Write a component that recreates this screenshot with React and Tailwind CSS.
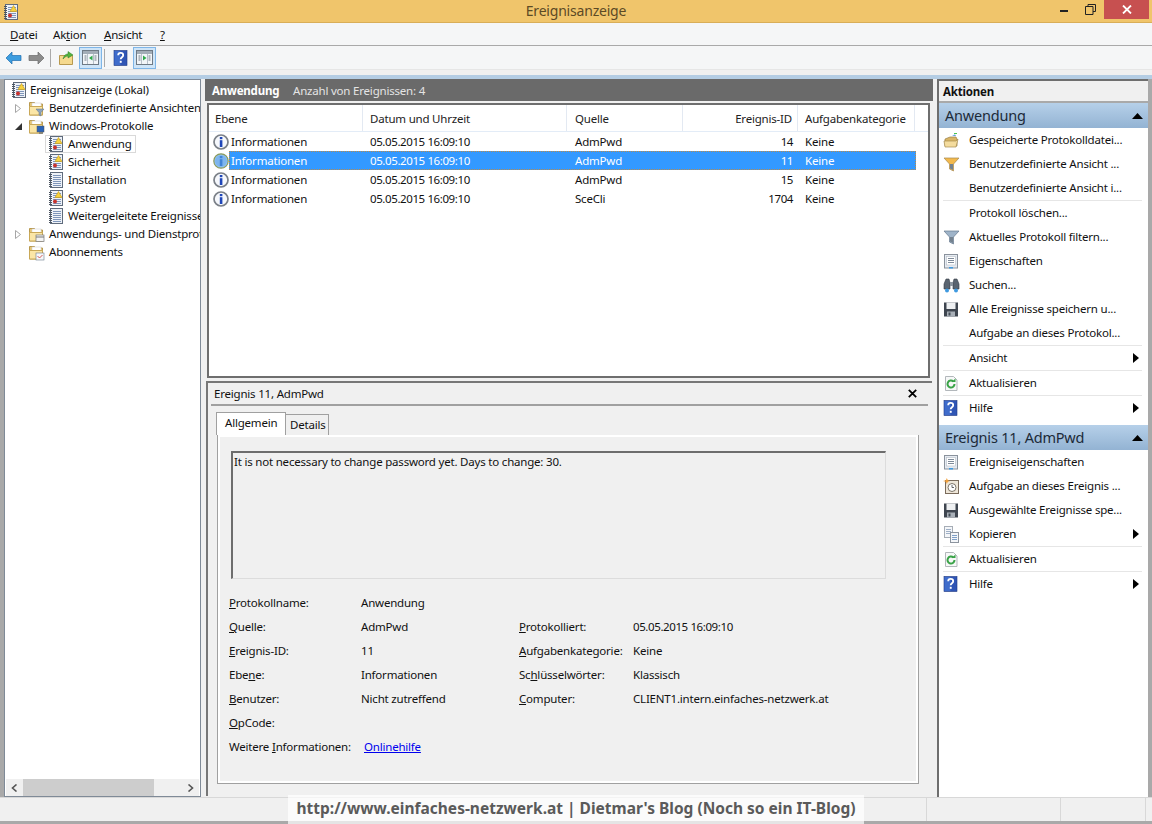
import React from 'react';

/* ── Icons ─────────────────────────────────────────── */
const LogIcon = ({ warn }) => (
  <svg width="16" height="16" viewBox="0 0 16 16" className="shrink-0">
    <rect x="2.500" y="0.500" width="12" height="15" fill="#eef2f8" stroke="#5f6b7c" />
    <path d="M5 3.500h8M5 5.500h8M5 7.500h8M5 9.500h8M5 11.500h8M5 13.500h8" stroke="#7f96ba" />
    <path d="M1 2.500h3M1 4.500h3M1 6.500h3M1 8.500h3M1 10.500h3M1 12.500h3M1 14.500h3" stroke="#4c5561" />
    {warn && (
      <>
        <path d="M10.500 1.500l3.500 6H7z" fill="#f7d23e" stroke="#c99a10" strokeWidth="0.6" />
        <circle cx="7" cy="11.500" r="2" fill="#c8332e" />
      </>
    )}
  </svg>
);

const Folder = ({ children }) => (
  <svg width="17" height="17" viewBox="0 0 17 17" className="shrink-0">
    <path d="M1.500 2.500h5l1 1.500h7v11h-13z" fill="#e7c777" stroke="#b8994f" />
    <rect x="4" y="3" width="9" height="4" fill="#fff" stroke="#c9c9c9" strokeWidth="0.5" />
    <path d="M1.500 6.500h13v8.500h-13z" fill="#fbe6a6" stroke="#c9a857" />
    {children}
  </svg>
);

const Funnel = ({ color = '#9fb4c9' }) => (
  <svg width="17" height="17" viewBox="0 0 17 17" className="shrink-0">
    <path d="M1 2h15l-5.500 6v7l-4-2V8z" fill={color} stroke="#66788c" strokeWidth="0.7" />
    <path d="M7 8h3v6l-3-1.500z" fill="#74828f" />
  </svg>
);

const YellowFunnel = () => (
  <svg width="17" height="17" viewBox="0 0 17 17" className="shrink-0">
    <path d="M1 2h15l-5.500 6v7l-4-2V8z" fill="#f3b94c" stroke="#a88a50" strokeWidth="0.7" />
    <path d="M7 8h3v6l-3-1.500z" fill="#74828f" />
  </svg>
);

const OpenFolder = () => (
  <svg width="17" height="17" viewBox="0 0 17 17" className="shrink-0">
    <path d="M11 1.500h3" stroke="#49c44c" />
    <path d="M2 7l5-2h6l1 2v7H2z" fill="#d9b565" stroke="#9a8048" strokeWidth="0.7" />
    <path d="M1 9h12l2-2-2 8H2z" fill="#f4dc9e" stroke="#a68c50" strokeWidth="0.7" />
    <path d="M9 3.500l3-1 1 1.500z" fill="#3c8fd8" />
  </svg>
);

const Props = () => (
  <svg width="17" height="17" viewBox="0 0 17 17" className="shrink-0">
    <rect x="1.500" y="1.500" width="13" height="13.500" fill="#e6ebf2" stroke="#8a929c" />
    <rect x="3.500" y="3.500" width="9" height="8.500" fill="#fff" stroke="#b5bcc5" strokeWidth="0.6" />
    <path d="M5 5.500h6M5 7.500h6M5 9.500h6" stroke="#7f8b9a" />
    <path d="M6 14h4v1.500H6z" fill="#3f9ae0" />
  </svg>
);

const Binoculars = () => (
  <svg width="17" height="17" viewBox="0 0 17 17" className="shrink-0">
    <path d="M3 2h3l1 4v6H1V7z" fill="#5a6470" stroke="#333b45" strokeWidth="0.6" />
    <path d="M11 2h3l2 5v5h-6V6z" fill="#5a6470" stroke="#333b45" strokeWidth="0.6" />
    <rect x="7" y="5" width="3" height="4" fill="#8b949e" />
    <circle cx="4" cy="13.500" r="2" fill="#3f9ae0" />
    <circle cx="13" cy="13.500" r="2" fill="#3f9ae0" />
  </svg>
);

const Floppy = () => (
  <svg width="17" height="17" viewBox="0 0 17 17" className="shrink-0">
    <path d="M1 1.500h14v14H1z" fill="#3f4650" />
    <rect x="3.500" y="1.500" width="9" height="6.500" fill="#eef0f2" />
    <rect x="4" y="10.500" width="8" height="5" fill="#a9b0b8" />
    <rect x="5.500" y="11.500" width="2" height="3" fill="#444c56" />
  </svg>
);

const Refresh = () => (
  <svg width="17" height="17" viewBox="0 0 17 17" className="shrink-0">
    <path d="M2.500 1.500h8l3.500 3.500v10.500H2.500z" fill="#f7f8f8" stroke="#b2b7bb" />
    <path d="M11.500 9a3.500 3.500 0 1 1-1.200-2.600" fill="none" stroke="#3aa348" strokeWidth="2" />
    <path d="M8.500 7h4V3.500z" fill="#3aa348" />
  </svg>
);

const Help = ({ size = 16 }) => (
  <svg width={size} height={size} viewBox="0 0 16 16" className="shrink-0">
    <rect x="1" y="0.500" width="13" height="15" fill="#2f55b5" stroke="#1f3a82" strokeWidth="0.6" />
    <rect x="1.500" y="1" width="6" height="14" fill="#3f6ccb" />
    <path d="M5.200 5.200c0-3 5-3 5 0 0 2-2.500 2-2.500 4" fill="none" stroke="#fff" strokeWidth="1.800" />
    <rect x="6.800" y="10.800" width="1.900" height="2" fill="#fff" />
  </svg>
);

const Clock = () => (
  <svg width="17" height="17" viewBox="0 0 17 17" className="shrink-0">
    <rect x="2.500" y="2.500" width="13" height="13" fill="#eee6d8" stroke="#7a6b5b" />
    <circle cx="9" cy="9.500" r="4" fill="#fff" stroke="#7c7468" />
    <path d="M9 7v2.500h2" fill="none" stroke="#444" strokeWidth="0.8" />
    <path d="M0 3l3-.8L3.800 0l1 2.200L7 3l-2.200.8L3.800 6 3 3.800z" fill="#f2a03a" />
  </svg>
);

const Copy = () => (
  <svg width="17" height="17" viewBox="0 0 17 17" className="shrink-0">
    <rect x="1.500" y="0.500" width="8" height="11" fill="#f4f6f9" stroke="#a6adb6" />
    <path d="M3 3.500h5M3 5.500h5M3 7.500h5" stroke="#9fb0c7" />
    <rect x="7.500" y="6.500" width="8" height="10" fill="#f4f6f9" stroke="#8c949e" />
    <path d="M9 9.500h5M9 11.500h5M9 13.500h5" stroke="#7fa0c8" />
  </svg>
);

const InfoIcon = ({ selected }) => (
  <svg width="16" height="16" viewBox="0 0 16 16" className="shrink-0">
    {selected ? (
      <>
        <circle cx="8" cy="8" r="7.200" fill="#8fc0f0" stroke="#8a9a5a" strokeWidth="1.200" />
        <circle cx="8" cy="8" r="5.800" fill="#7db5ee" />
        <rect x="6.800" y="3" width="2.600" height="2.200" fill="#3f83d8" />
        <rect x="6.800" y="6.200" width="2.600" height="6.800" fill="#3f83d8" />
      </>
    ) : (
      <>
        <circle cx="8" cy="8" r="7" fill="#f6f8fc" stroke="#7b8088" strokeWidth="1.700" />
        <rect x="6.800" y="3" width="2.600" height="2.200" fill="#1f46b8" />
        <rect x="6.800" y="6.200" width="2.600" height="6.800" fill="#1f46b8" />
      </>
    )}
  </svg>
);

const PaneIcon = ({ right }) => (
  <svg width="17" height="15" viewBox="0 0 17 15" className="shrink-0">
    <rect x="0.500" y="0.500" width="16" height="14" fill="#f2f5f8" stroke="#6f7a85" />
    <rect x="1" y="1" width="15" height="3" fill="#a3adb7" />
    <path d="M2.500 6h2M2.500 8h2M2.500 10h2M12.500 6h2M12.500 8h2M12.500 10h2" stroke="#6f7a85" />
    <path d={right ? 'M7 5.500l3.500 2.500L7 10.500z' : 'M10.500 5.500L7 8l3.500 2.500z'} fill="#2fa84a" />
    <path d="M5.500 4v10M11.500 4v10" stroke="#b7c0c9" />
  </svg>
);

const SubArrow = () => (
  <svg width="6" height="10" viewBox="0 0 6 10" className="shrink-0"><path d="M0 0l6 5-6 5z" fill="#000" /></svg>
);

const UpArrow = () => (
  <svg width="11" height="6" viewBox="0 0 11 6" className="shrink-0"><path d="M5.500 0L11 6H0z" fill="#000" /></svg>
);

/* ── Data ──────────────────────────────────────────── */
const EVENTS = [
  { date: '05.05.2015 16:09:10', src: 'AdmPwd', id: '14' },
  { date: '05.05.2015 16:09:10', src: 'AdmPwd', id: '11', selected: true },
  { date: '05.05.2015 16:09:10', src: 'AdmPwd', id: '15' },
  { date: '05.05.2015 16:09:10', src: 'SceCli', id: '1704' },
];

const ACTIONS_LOG = [
  { icon: <OpenFolder />, label: 'Gespeicherte Protokolldatei...' },
  { icon: <YellowFunnel />, label: 'Benutzerdefinierte Ansicht ...' },
  { label: 'Benutzerdefinierte Ansicht i...', sep: true },
  { label: 'Protokoll löschen...' },
  { icon: <Funnel />, label: 'Aktuelles Protokoll filtern...' },
  { icon: <Props />, label: 'Eigenschaften' },
  { icon: <Binoculars />, label: 'Suchen...' },
  { icon: <Floppy />, label: 'Alle Ereignisse speichern u...' },
  { label: 'Aufgabe an dieses Protokol...', sep: true },
  { label: 'Ansicht', sub: true, sep: true },
  { icon: <Refresh />, label: 'Aktualisieren', sep: true },
  { icon: <Help />, label: 'Hilfe', sub: true },
];

const ACTIONS_EVENT = [
  { icon: <Props />, label: 'Ereigniseigenschaften' },
  { icon: <Clock />, label: 'Aufgabe an dieses Ereignis ...' },
  { icon: <Floppy />, label: 'Ausgewählte Ereignisse spe...' },
  { icon: <Copy />, label: 'Kopieren', sub: true, sep: true },
  { icon: <Refresh />, label: 'Aktualisieren', sep: true },
  { icon: <Help />, label: 'Hilfe', sub: true },
];

/* ── Pieces ────────────────────────────────────────── */
function TitleBar() {
  return (
    <div className="grid grid-cols-[1fr_auto_1fr] h-[23px] bg-[#f0c56b] border-b border-[#d9ae58]">
      <div className="pl-[3px] pt-[4px]">
        <LogIcon warn />
      </div>
      <div className="text-[14px] leading-[22px] text-[#5c4a25]">Ereignisanzeige</div>
      <div className="flex justify-end items-start">
        <div className="flex items-center justify-center w-[26px] h-[19px]">
          <div className="w-[8px] h-[2px] mt-[3px] bg-[#222]" />
        </div>
        <div className="flex items-center justify-center w-[26px] h-[19px] mr-[1px]">
          <svg width="11" height="11" viewBox="0 0 11 11"><path d="M3 2.500V.5h7.500v7H8M.5 2.500h7.500v8H.5z" fill="none" stroke="#222" /></svg>
        </div>
        <div className="flex items-center justify-center w-[45px] h-[19px] mr-[3px] bg-[#c75050]">
          <svg width="10" height="9" viewBox="0 0 10 9"><path d="M1 .5l8 8M9 .5l-8 8" stroke="#fff" strokeWidth="1.800" /></svg>
        </div>
      </div>
    </div>
  );
}

function MenuBar() {
  return (
    <div className="flex items-center h-[23px] pl-[10px] pt-px bg-[#f5f6f7] border-b border-[#a9a9a9] text-[11.500px] text-[#111]">
      <span className="w-[43px]"><u>D</u>atei</span>
      <span className="w-[51px]">Ak<u>t</u>ion</span>
      <span className="w-[56px]"><u>A</u>nsicht</span>
      <span><u>?</u></span>
    </div>
  );
}

function ToolBar() {
  return (
    <div className="flex items-center h-[23px] pl-[5px] bg-[#f5f6f7]">
      <svg width="17" height="14" viewBox="0 0 17 14" className="shrink-0">
        <path d="M7 1L1 7l6 6V9.500h9v-5H7z" fill="#3d9ddf" stroke="#1f6fb0" strokeWidth="0.7" />
      </svg>
      <svg width="17" height="14" viewBox="0 0 17 14" className="shrink-0 ml-[6px]">
        <path d="M10 1l6 6-6 6V9.500H1v-5h9z" fill="#8c8c8c" stroke="#6a6a6a" strokeWidth="0.7" />
      </svg>
      <div className="w-px h-[18px] ml-[5px] bg-[#a9a9a9]" />
      <div className="ml-[7px]">
        <svg width="17" height="17" viewBox="0 0 17 17" className="shrink-0">
          <path d="M1.500 6.500h13v9h-13z" fill="#f5d98e" stroke="#b8994f" />
          <path d="M5 10c1-4 3-5 5-5V2.500L15 6l-5 3V7c-2 0-3 1-5 3z" fill="#52b33f" stroke="#2f7d2a" strokeWidth="0.5" />
        </svg>
      </div>
      <div className="flex items-center justify-center w-[23px] h-[22px] ml-[4px] bg-[#cfe5f8] border border-[#7fb6e8]">
        <PaneIcon />
      </div>
      <div className="w-px h-[18px] ml-[2px] bg-[#a9a9a9]" />
      <div className="ml-[8px]"><Help size={16} /></div>
      <div className="flex items-center justify-center w-[23px] h-[22px] ml-[4px] bg-[#cfe5f8] border border-[#7fb6e8]">
        <PaneIcon right />
      </div>
    </div>
  );
}

function Expander({ open }) {
  return (
    <span className="flex items-center w-[13px] shrink-0">
      {open ? (
        <svg width="7" height="7" viewBox="0 0 7 7"><path d="M7 0v7H0z" fill="#333" /></svg>
      ) : (
        <svg width="6" height="9" viewBox="0 0 6 9"><path d="M.5 .5l5 4-5 4z" fill="#fff" stroke="#a6a6a6" /></svg>
      )}
    </span>
  );
}

function Tree() {
  return (
    <div className="flex flex-col w-[197px] shrink-0 bg-white border border-[#7f8a97] overflow-hidden">
      <div className="flex-1 pt-px whitespace-nowrap text-[11.500px] text-[#111] overflow-hidden">
        <div className="flex items-center h-[18px] pl-[6px] gap-[3px]"><LogIcon warn />Ereignisanzeige (Lokal)</div>
        <div className="flex items-center h-[18px] pl-[10px]"><Expander /><Folder><path d="M8 9h8l-3 3.500V16l-2-1v-2.500z" fill="#8ea4bb" stroke="#5f7186" strokeWidth="0.5" /></Folder><span className="ml-[4px]">Benutzerdefinierte Ansichten</span></div>
        <div className="flex items-center h-[18px] pl-[10px]"><Expander open /><Folder><rect x="9" y="8" width="7" height="6" fill="#2a63b8" stroke="#555" strokeWidth="0.5" /><path d="M11 15h4" stroke="#777" strokeWidth="1.500" /></Folder><span className="ml-[4px]">Windows-Protokolle</span></div>
        {[
          { label: 'Anwendung', warn: true, selected: true },
          { label: 'Sicherheit', warn: true },
          { label: 'Installation' },
          { label: 'System', warn: true },
          { label: 'Weitergeleitete Ereignisse' },
        ].map((item) => (
          <div key={item.label} className="h-[18px] pl-[40px]">
            <div className={item.selected
              ? 'inline-flex items-center h-[18px] pl-[2px] pr-[3px] gap-[4px] border border-[#d9d9d9]'
              : 'inline-flex items-center h-[18px] pl-[2px] pr-[3px] gap-[4px] border border-transparent'}
            >
              <LogIcon warn={item.warn} />
              {item.label}
            </div>
          </div>
        ))}
        <div className="flex items-center h-[18px] pl-[10px]"><Expander /><Folder><rect x="8" y="9" width="8" height="6.500" fill="#f4f4f4" stroke="#777" strokeWidth="0.7" /><path d="M8 11h8" stroke="#777" /></Folder><span className="ml-[4px]">Anwendungs- und Dienstprotokolle</span></div>
        <div className="flex items-center h-[18px] pl-[23px]"><Folder><rect x="8" y="9" width="8" height="7" fill="#f6f8fb" stroke="#6d7c8c" strokeWidth="0.6" /><path d="M9.500 12l2 2 3-3" fill="none" stroke="#c8332e" strokeWidth="0.8" /></Folder><span className="ml-[4px]">Abonnements</span></div>
      </div>
      <div className="flex items-center h-[17px] mx-px bg-[#f0f0f0]">
        <div className="flex items-center justify-center w-[17px] shrink-0">
          <svg width="7" height="8" viewBox="0 0 7 8"><path d="M5.500 .5L1.500 4l4 3.500" fill="none" stroke="#555" strokeWidth="1.600" /></svg>
        </div>
        <div className="w-[131px] h-full bg-[#cdcdcd]" />
        <div className="flex-1" />
        <div className="flex items-center justify-center w-[17px] shrink-0">
          <svg width="7" height="8" viewBox="0 0 7 8"><path d="M1.500 .5L5.500 4l-4 3.500" fill="none" stroke="#555" strokeWidth="1.600" /></svg>
        </div>
      </div>
    </div>
  );
}

function EventRow({ e }) {
  return (
    <div className="flex h-[19px] leading-[19px]">
      <div className="flex items-center w-[20px] pl-[4px] shrink-0"><InfoIcon selected={e.selected} /></div>
      <div className={e.selected
        ? 'flex w-[687px] bg-[#3399ff] text-white outline-1 outline-dotted outline-offset-[-1px] outline-[#b98a4a]'
        : 'flex w-[687px] text-[#111]'}
      >
        <div className="w-[134px] pl-[2px]">Informationen</div>
        <div className="w-[204px] pl-[7px] tracking-[-0.4px]">{e.date}</div>
        <div className="w-[116px] pl-[8px]">{e.src}</div>
        <div className="w-[115px] pr-[5px] text-right tracking-[-0.4px]">{e.id}</div>
        <div className="pl-[7px]">Keine</div>
      </div>
    </div>
  );
}

function EventList() {
  const th = 'h-full flex items-center pt-px border-r border-[#e3e9f2]';
  return (
    <div className="h-[275px] ml-[2px] mr-[3px] mb-[3px] bg-white border-2 border-[#6e6e6e] text-[11.500px]">
      <div className="flex h-[27px] text-[#222] border-b border-[#e3ecf7]">
        <div className={th + ' w-[154px] pl-[6px]'}>Ebene</div>
        <div className={th + ' w-[204px] pl-[7px]'}>Datum und Uhrzeit</div>
        <div className={th + ' w-[116px] pl-[8px]'}>Quelle</div>
        <div className={th + ' w-[115px] pr-[5px] justify-end'}>Ereignis-ID</div>
        <div className={th + ' w-[117px] pl-[7px]'}>Aufgabenkategorie</div>
      </div>
      {EVENTS.map((e) => <EventRow key={e.id} e={e} />)}
    </div>
  );
}

function Field({ label, value }) {
  return (
    <>
      <div>{label}</div>
      <div>{value}</div>
    </>
  );
}

function EventDetail() {
  return (
    <div className="h-[415px] ml-px mr-[1px] bg-[#f0f0f0] border-t-2 border-l-2 border-[#777] text-[11.500px] text-[#111]">
      <div className="flex items-center justify-between h-[21px] pl-[6px] pr-[15px]">
        <span>Ereignis 11, AdmPwd</span>
        <svg width="9" height="9" viewBox="0 0 9 9"><path d="M.8 .8l7.400 7.400M8.200 .8L.8 8.200" stroke="#000" strokeWidth="1.800" /></svg>
      </div>
      <div className="h-[2px] ml-[3px] mr-[4px] bg-[#a0a0a0]" />
      <div className="flex items-end h-[29px] pl-[8px]">
        <div className="w-[70px] h-[23px] leading-[20px] pl-[8px] bg-white border border-b-0 border-[#a0a0a0]">Allgemein</div>
        <div className="w-[43px] h-[21px] leading-[20px] pl-[4px] bg-[#f0f0f0] border border-l-0 border-b-0 border-[#a0a0a0]">Details</div>
      </div>
      <div className="w-[702px] h-[349px] ml-[9px] pt-[16px] border border-t-0 border-[#a0a0a0] shadow-[inset_0_0_0_2px_#fff]">
        <div className="w-[655px] h-[128px] ml-[13px] px-px leading-[18px] border-2 border-r border-b border-t-[#6d6d6d] border-l-[#6d6d6d] border-r-[#dcdcdc] border-b-[#dcdcdc]">
          It is not necessary to change password yet. Days to change: 30.
        </div>
        <div className="grid grid-cols-[132px_158px_114px_1fr] auto-rows-[24px] items-center ml-[11px] mt-[12px]">
          <Field label={<><u>P</u>rotokollname:</>} value="Anwendung" />
          <div /><div />
          <Field label={<><u>Q</u>uelle:</>} value="AdmPwd" />
          <Field label={<><u>P</u>rotokolliert:</>} value={<span className="tracking-[-0.4px]">05.05.2015 16:09:10</span>} />
          <Field label={<><u>E</u>reignis-ID:</>} value="11" />
          <Field label={<><u>A</u>ufgabenkategorie:</>} value="Keine" />
          <Field label={<>Ebe<u>n</u>e:</>} value="Informationen" />
          <Field label={<>Sc<u>h</u>lüsselwörter:</>} value="Klassisch" />
          <Field label={<><u>B</u>enutzer:</>} value="Nicht zutreffend" />
          <Field label={<><u>C</u>omputer:</>} value="CLIENT1.intern.einfaches-netzwerk.at" />
          <Field label={<><u>O</u>pCode:</>} value="" />
          <div /><div />
          <div>Weitere <u>I</u>nformationen:</div>
          <div className="pl-[3px]"><a className="text-[#0000ee] underline">Onlinehilfe</a></div>
        </div>
      </div>
    </div>
  );
}

function ActionHeader({ title }) {
  return (
    <div className="flex items-center justify-between h-[25px] pl-[6px] pr-[5px] bg-gradient-to-b from-[#b6d0e9] to-[#93b3d3] text-[14.500px] text-[#1c2a38]">
      <span className="pt-px">{title}</span>
      <UpArrow />
    </div>
  );
}

function ActionRows({ items }) {
  return items.map((a) => (
    <React.Fragment key={a.label}>
      <div className="flex items-center h-[24px] text-[11.500px] text-[#111]">
        <div className="flex items-center w-[30px] pl-[4px] shrink-0">{a.icon}</div>
        <span className="flex-1 whitespace-nowrap">{a.label}</span>
        {a.sub && <span className="pr-[9px]"><SubArrow /></span>}
      </div>
      {a.sep && <div className="h-px ml-[4px] mr-[6px] bg-[#e6e6e6]" />}
    </React.Fragment>
  ));
}

function ActionsPane() {
  return (
    <div className="flex flex-col w-[211px] shrink-0 bg-white border-l-2 border-t-2 border-[#6e6e6e]">
      <div className="h-[22px] pl-[4px] leading-[21px] bg-[#f0f0f0] border-b-2 border-[#a9a9a9] text-[11.500px] font-bold text-[#111]">Aktionen</div>
      <ActionHeader title="Anwendung" />
      <ActionRows items={ACTIONS_LOG} />
      <div className="h-[5px]" />
      <ActionHeader title="Ereignis 11, AdmPwd" />
      <ActionRows items={ACTIONS_EVENT} />
    </div>
  );
}

/* ── Page ──────────────────────────────────────────── */
export default function App() {
  return (
    <div className="relative flex flex-col w-[1152px] h-[824px] overflow-hidden bg-[#f0f0f0] font-['Noto_Sans',sans-serif] tracking-[-0.2px] select-none">
      <TitleBar />
      <MenuBar />
      <ToolBar />
      <div className="h-[6px] bg-[#f0f0f0] border-t border-[#e6e6e6]" />
      <div className="h-[4px] bg-[#b4cde4]" />

      <div className="flex flex-1 min-h-0 border-x-4 border-[#a9a9a9]">
        <Tree />
        <div className="w-[4px] shrink-0" />
        <div className="flex flex-col w-[728px] shrink-0">
          <div className="flex items-center h-[22px] mb-[2px] pl-[7px] pt-px bg-[#6a6a6a] text-[11.500px]">
            <span className="w-[81px] font-bold text-white">Anwendung</span>
            <span className="text-[#e4e4e4]">Anzahl von Ereignissen: 4</span>
          </div>
          <EventList />
          <EventDetail />
        </div>
        <div className="w-[4px] shrink-0" />
        <ActionsPane />
      </div>

      <div className="flex h-[24px] bg-[#f0f0f0] border-t border-[#d8d8d8]">
        <div className="w-[927px] border-r border-[#d8d8d8]" />
        <div className="w-[134px] border-r border-[#d8d8d8]" />
        <div className="w-[85px] border-r border-[#d8d8d8]" />
      </div>
      <div className="h-[3px] bg-[#a9a9a9]" />

      {/* blog watermark burnt into the screenshot */}
      <div className="absolute left-[288px] bottom-0 flex items-center justify-center w-[576px] h-[29px] pb-[2px] bg-white/70 text-[15.500px] font-bold tracking-normal text-[#5a5a5a] whitespace-nowrap">
        http://www.einfaches-netzwerk.at | Dietmar's Blog (Noch so ein IT-Blog)
      </div>
    </div>
  );
}
